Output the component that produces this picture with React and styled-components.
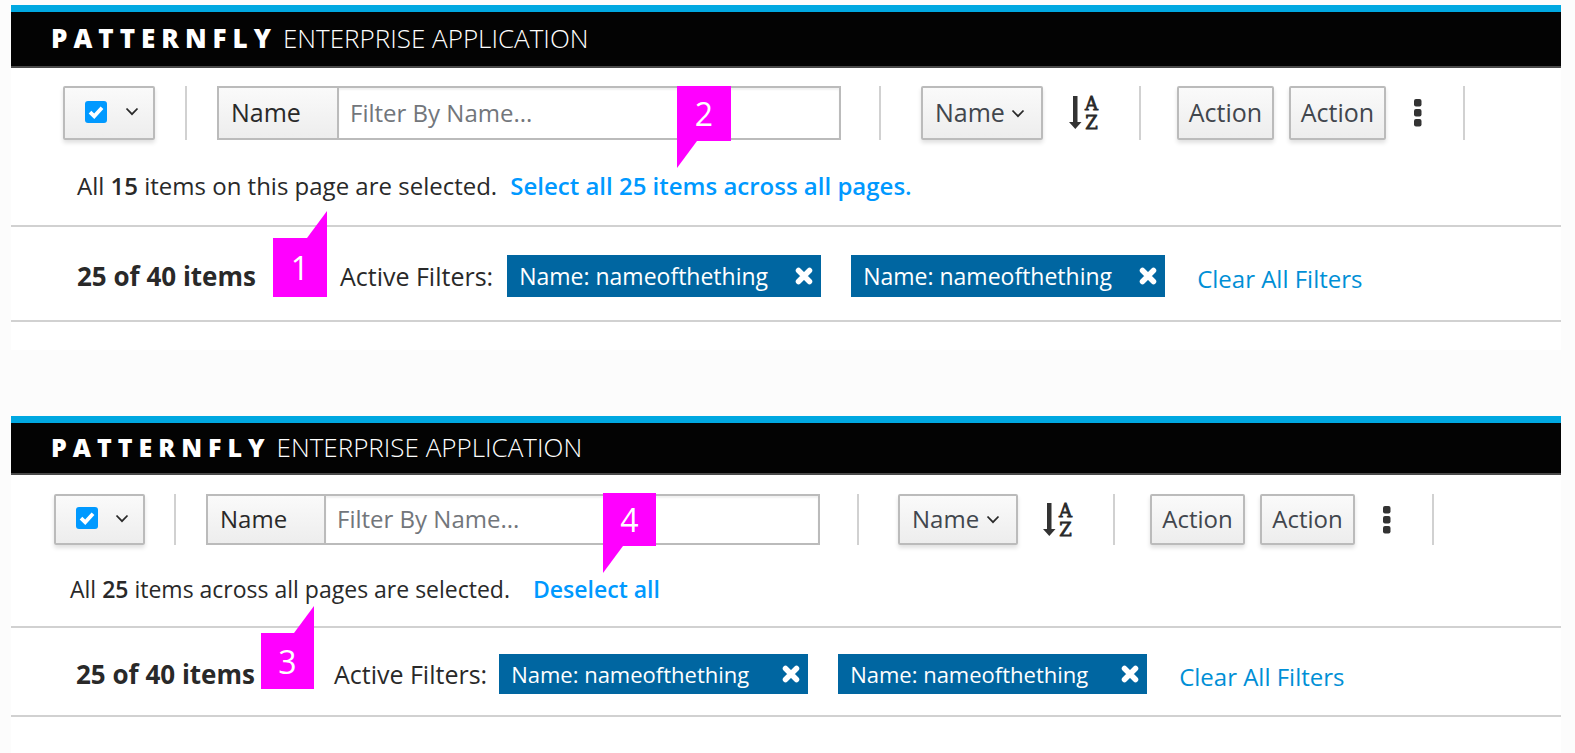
import React, { useId } from "react";
import styled, { createGlobalStyle, ThemeProvider } from "styled-components";

const GlobalStyle = createGlobalStyle`
  *, *::before, *::after { box-sizing: border-box; }
  body {
    margin: 0;
    background: #fcfcfc;
    color: #292929;
    font-family: "Open Sans", "Noto Sans", sans-serif;
  }
  button, input, select { font-family: inherit; }
`;

const roomy = {
  text: 25,
  messageText: 24,
  brand: 26,
  tracking: 6,
  chipText: 23,
  badgeText: 32,
  mast: 56,
  control: 54,
  toolbarPad: "18px 96px 0 52px",
  split: 92,
  afterSplit: 30,
  afterRule: 30,
  scope: 120,
  afterFilter: 38,
  afterRule2: 40,
  sort: 122,
  afterSort: 26,
  afterSortIcon: 38,
  afterRule3: 36,
  action: 97,
  actionGap: 15,
  kebabPad: 28,
  afterKebab: 41,
  message: 85,
  messagePad: 66,
  messageGap: 13,
  summary: 94,
  summaryPad: 66,
  filtersLeft: 84,
  chipLeft: 14,
  chip: 314,
  chipHeight: 42,
  chipGap: 30,
  clearGap: 32,
  badge: 54,
  bottom: 28,
};

const compact = {
  ...roomy,
  text: 24,
  messageText: 23,
  brand: 25,
  chipText: 22,
  mast: 52,
  control: 51,
  toolbarPad: "19px 127px 0 43px",
  split: 91,
  afterSplit: 29,
  afterRule: 30,
  scope: 118,
  afterFilter: 37,
  afterRule2: 39,
  sort: 120,
  afterSort: 25,
  afterSortIcon: 38,
  afterRule3: 35,
  action: 95,
  kebabPad: 28,
  message: 81,
  messagePad: 59,
  messageGap: 23,
  summary: 88,
  summaryPad: 65,
  filtersLeft: 79,
  chipLeft: 12,
  chip: 309,
  chipHeight: 40,
  badge: 53,
  bottom: 36,
};

const Page = styled.main`
  display: flex;
  flex-direction: column;
  gap: 66px;
  padding: 5px 14px 0 11px;
`;

const Panel = styled.section`
  position: relative;
  background: #fff;
  padding-bottom: ${({ theme }) => theme.bottom}px;
`;

const Masthead = styled.header`
  display: flex;
  align-items: center;
  gap: 12px;
  height: ${({ theme }) => theme.mast + 7}px;
  padding: 0 40px 3px;
  background: #030303;
  border-top: 7px solid #00a8e1;
  border-bottom: 2px solid #4a4a4a;
  color: #fff;
  font-size: 26px;
  font-weight: 300;
  white-space: nowrap;
`;

const Brand = styled.strong`
  font-size: ${({ theme }) => theme.brand}px;
  font-weight: 800;
  letter-spacing: ${({ theme }) => theme.tracking}px;
  margin-right: -6px;
`;

const Toolbar = styled.div`
  display: flex;
  align-items: center;
  padding: ${({ theme }) => theme.toolbarPad};
`;

const Rule = styled.span`
  flex: none;
  width: 2px;
  height: ${({ theme }) => theme.control}px;
  margin: 0 ${({ $after }) => $after}px 0 ${({ $before }) => $before}px;
  background: #d1d1d1;
`;

const raised = ({ theme }) => `
  height: ${theme.control}px;
  border: 2px solid #bbb;
  border-radius: 2px;
  background: linear-gradient(#fafafa, #ededed);
  box-shadow: 0 3px 4px rgba(3, 3, 3, 0.12);
`;

const SplitButton = styled.div`
  ${raised}
  flex: none;
  display: flex;
  align-items: center;
  justify-content: space-between;
  width: ${({ theme }) => theme.split}px;
  padding: 0 14px 3px 20px;
`;

const TickCell = styled.label`
  display: grid;
  place-items: center;
  > * { grid-area: 1 / 1; }
  svg { pointer-events: none; }
`;

const Tick = styled.input`
  appearance: none;
  width: 22px;
  height: 22px;
  margin: 0;
  border-radius: 3px;
  background: #0099ff;
`;

const PlainButton = styled.button`
  display: grid;
  place-items: center;
  padding: 0;
  border: 0;
  background: none;
  color: inherit;
`;

const FilterGroup = styled.div`
  flex: 1;
  min-width: 0;
  display: flex;
  height: ${({ theme }) => theme.control}px;
  border: 2px solid #bbb;
`;

const FilterLabel = styled.label`
  flex: none;
  display: flex;
  align-items: center;
  width: ${({ theme }) => theme.scope}px;
  padding: 0 12px 2px;
  border-right: 2px solid #bbb;
  background: linear-gradient(#fafafa, #ededed);
  font-size: ${({ theme }) => theme.text}px;
  font-weight: 500;
`;

const FilterInput = styled.input`
  flex: 1;
  min-width: 0;
  border: 0;
  padding: 0 11px 2px;
  background: #fff;
  box-shadow: inset 0 2px 2px rgba(3, 3, 3, 0.06);
  font-size: 24px;
  color: #292929;
  &::placeholder { color: #72767b; opacity: 1; }
`;

const SortField = styled.div`
  flex: none;
  display: grid;
  align-items: center;
  width: ${({ theme }) => theme.sort}px;
  > * { grid-area: 1 / 1; }
  svg {
    justify-self: end;
    margin-right: 18px;
    pointer-events: none;
  }
`;

const SortSelect = styled.select`
  ${raised}
  appearance: none;
  width: 100%;
  padding: 0 0 2px 12px;
  color: #41464d;
  font-size: ${({ theme }) => theme.text}px;
  font-weight: 500;
`;

const IconButton = styled(PlainButton)`
  flex: none;
  margin: 0 ${({ $after }) => $after}px 0 ${({ $before }) => $before}px;
`;

const Actions = styled.div`
  flex: none;
  display: flex;
  gap: ${({ theme }) => theme.actionGap}px;
`;

const Action = styled.button`
  ${raised}
  width: ${({ theme }) => theme.action}px;
  padding: 0 0 2px;
  color: #41464d;
  font-size: ${({ theme }) => theme.text}px;
  font-weight: 500;
`;

const Message = styled.p`
  display: flex;
  align-items: center;
  gap: ${({ theme }) => theme.messageGap}px;
  height: ${({ theme }) => theme.message}px;
  margin: 0;
  padding: 6px 66px 0 ${({ theme }) => theme.messagePad}px;
  font-size: ${({ theme }) => theme.messageText}px;
  white-space: nowrap;
  strong { font-weight: 600; }
`;

const BulkLink = styled.a`
  color: #0099ff;
  font-weight: 600;
  text-decoration: none;
`;

const Summary = styled.div`
  display: flex;
  align-items: center;
  height: ${({ theme }) => theme.summary + 3}px;
  padding: 4px 66px 0 ${({ theme }) => theme.summaryPad}px;
  border-top: 2px solid #d1d1d1;
  border-bottom: 2px solid #d1d1d1;
  white-space: nowrap;
`;

const Count = styled.strong`
  font-size: 26px;
  font-weight: 700;
`;

const FiltersLabel = styled.span`
  margin: 0 ${({ theme }) => theme.chipLeft}px 0 ${({ theme }) => theme.filtersLeft}px;
  font-size: 25px;
  font-weight: 500;
`;

const Chips = styled.ul`
  display: flex;
  gap: ${({ theme }) => theme.chipGap}px;
  margin: 0 ${({ theme }) => theme.clearGap}px 0 0;
  padding: 0;
  list-style: none;
`;

const Chip = styled.li`
  display: flex;
  align-items: center;
  justify-content: space-between;
  width: ${({ theme }) => theme.chip}px;
  height: ${({ theme }) => theme.chipHeight}px;
  padding: 0 8px 0 12px;
  background: #0066a1;
  color: #fff;
  font-size: ${({ theme }) => theme.chipText}px;
  font-weight: 500;
`;

const ClearLink = styled.a`
  padding-top: 6px;
  color: #008fd6;
  font-size: 24px;
  text-decoration: none;
`;

const Callout = styled.span`
  position: absolute;
  z-index: 1;
  left: ${({ $x }) => $x}px;
  top: ${({ $y }) => $y}px;
  display: grid;
  place-items: center;
  width: ${({ theme }) => theme.badge}px;
  height: ${({ $height }) => $height}px;
  background: #f0f;
  color: #fff;
  font-size: ${({ theme }) => theme.badgeText}px;
  &::after {
    content: "";
    position: absolute;
    width: 20px;
    height: 27px;
    background: inherit;
    ${({ $point }) =>
      $point === "up"
        ? "right: 0; bottom: 100%; clip-path: polygon(100% 0, 100% 100%, 0 100%);"
        : "left: 0; top: 100%; clip-path: polygon(0 0, 100% 0, 0 100%);"}
  }
`;

const Chevron = () => (
  <svg width="14" height="9" viewBox="0 0 14 9" aria-hidden="true">
    <path d="M1.500 1.500 7 7.200l5.500-5.700" fill="none" stroke="#292929" strokeWidth="1.800" />
  </svg>
);

const Check = () => (
  <svg width="16" height="14" viewBox="0 0 16 14" aria-hidden="true">
    <path d="M2 7.200 6.200 11.200 14 2.800" fill="none" stroke="#fff" strokeWidth="3.800" />
  </svg>
);

const Cross = () => (
  <svg width="18" height="18" viewBox="0 0 18 18" aria-hidden="true">
    <path d="M3.500 3.500 14.500 14.500M14.500 3.500 3.500 14.500" stroke="#fff" strokeWidth="5.500" strokeLinecap="round" />
  </svg>
);

const SortIcon = () => (
  <svg width="32" height="48" viewBox="0 -6 32 48" aria-hidden="true">
    <path d="M4 1h4.500v26H12.500L6.300 34 0 27h4z" fill="#333" />
    <g fill="#292929" stroke="#292929" strokeWidth="0.800" fontFamily="DejaVu Serif, serif" fontSize="18">
      <text x="22.500" y="15" textAnchor="middle">A</text>
      <text x="22.500" y="34" textAnchor="middle">Z</text>
    </g>
  </svg>
);

const Kebab = () => (
  <svg width="8" height="28" viewBox="0 0 8 28" aria-hidden="true">
    {[0, 10, 20].map((y) => (
      <rect key={y} y={y} width="7.500" height="7.500" rx="2" fill="#333" />
    ))}
  </svg>
);

function FilterChip({ children }) {
  return (
    <Chip>
      {children}
      <PlainButton type="button" aria-label="Remove filter">
        <Cross />
      </PlainButton>
    </Chip>
  );
}

function Application({ metrics: m, message, link, callouts }) {
  const id = useId();
  return (
    <ThemeProvider theme={m}>
      <Panel>
        <Masthead>
          <Brand>PATTERNFLY</Brand>
          <span>ENTERPRISE APPLICATION</span>
        </Masthead>
        <Toolbar>
          <SplitButton>
            <TickCell>
              <Tick type="checkbox" defaultChecked aria-label="Select all" />
              <Check />
            </TickCell>
            <PlainButton type="button" aria-label="Selection options">
              <Chevron />
            </PlainButton>
          </SplitButton>
          <Rule $before={m.afterSplit} $after={m.afterRule} />
          <FilterGroup>
            <FilterLabel htmlFor={id}>Name</FilterLabel>
            <FilterInput id={id} type="text" placeholder="Filter By Name..." />
          </FilterGroup>
          <Rule $before={m.afterFilter} $after={m.afterRule2} />
          <SortField>
            <SortSelect aria-label="Sort by">
              <option>Name</option>
            </SortSelect>
            <Chevron />
          </SortField>
          <IconButton type="button" aria-label="Sort direction" $before={m.afterSort} $after={m.afterSortIcon}>
            <SortIcon />
          </IconButton>
          <Rule $before={0} $after={m.afterRule3} />
          <Actions>
            <Action type="button">Action</Action>
            <Action type="button">Action</Action>
          </Actions>
          <IconButton type="button" aria-label="More actions" $before={m.kebabPad} $after={m.afterKebab}>
            <Kebab />
          </IconButton>
          <Rule $before={0} $after={0} />
        </Toolbar>
        <Message>
          <span>{message}</span>
          <BulkLink href="#select">{link}</BulkLink>
        </Message>
        <Summary>
          <Count>25 of 40 items</Count>
          <FiltersLabel>Active Filters:</FiltersLabel>
          <Chips>
            <FilterChip>Name: nameofthething</FilterChip>
            <FilterChip>Name: nameofthething</FilterChip>
          </Chips>
          <ClearLink href="#clear">Clear All Filters</ClearLink>
        </Summary>
        {callouts.map((c) => (
          <Callout key={c.label} $x={c.x} $y={c.y} $height={c.height} $point={c.point}>
            {c.label}
          </Callout>
        ))}
      </Panel>
    </ThemeProvider>
  );
}

export default function App() {
  return (
    <>
      <GlobalStyle />
      <Page>
        <Application
          metrics={roomy}
          message={<>All <strong>15</strong> items on this page are selected.</>}
          link="Select all 25 items across all pages."
          callouts={[
            { label: "1", x: 262, y: 233, height: 59, point: "up" },
            { label: "2", x: 666, y: 81, height: 55, point: "down" },
          ]}
        />
        <Application
          metrics={compact}
          message={<>All <strong>25</strong> items across all pages are selected.</>}
          link="Deselect all"
          callouts={[
            { label: "3", x: 250, y: 217, height: 56, point: "up" },
            { label: "4", x: 592, y: 77, height: 53, point: "down" },
          ]}
        />
      </Page>
    </>
  );
}
